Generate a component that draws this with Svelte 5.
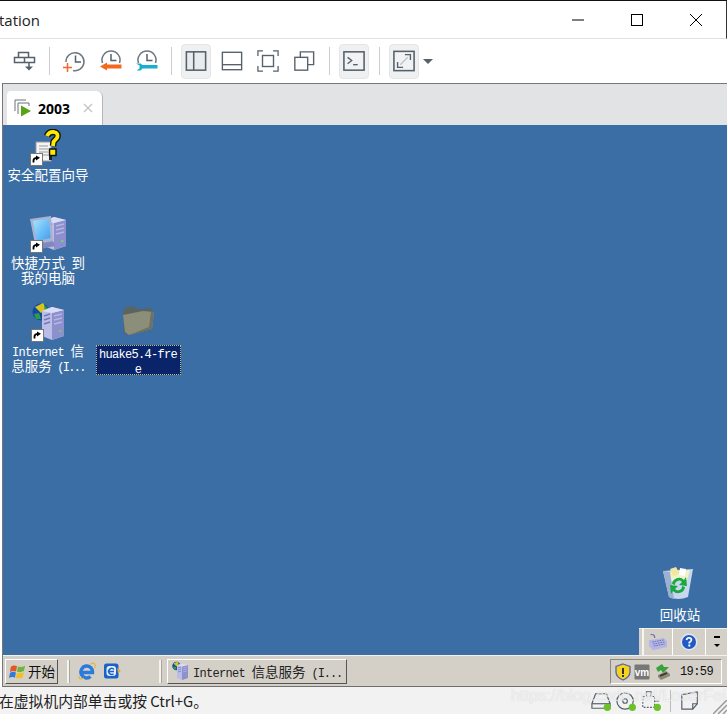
<script>
  const clocks = ['plus', 'back', 'wrench'];
</script>

{#snippet shortcut()}
  <rect x="0.5" y="0.5" width="12" height="12" fill="#fff" stroke="#777"/>
  <path d="M3.5 9.5 L3.5 7.5 Q3.5 5 7 4.8" fill="none" stroke="#000" stroke-width="1.8"/>
  <path d="M6 2.5 L10 4.8 L6 7.5Z" fill="#000"/>
{/snippet}

{#snippet tower()}
  <path d="M2 4 L12 0 L24 3 L24 29 L12 33 L2 29Z" fill="#b9bde8"/>
  <path d="M12 6 L24 3 L24 29 L12 33Z" fill="#8d90cc"/>
  <path d="M2 4 L12 0 L24 3 L12 6Z" fill="#dadcf6"/>
  <path d="M4 9 L10 7 M4 13 L10 11 M4 17 L10 15" stroke="#7478b4" stroke-width="1.4"/>
  <path d="M14 9 L22 7 M14 13 L22 11 M14 17 L22 15" stroke="#b4b7e4" stroke-width="1.4"/>
  <rect x="19" y="23" width="2.5" height="2" fill="#6fcf6f"/>
{/snippet}

{#snippet iisIcon()}
  <svg class="fill" viewBox="0 0 36 40">
    <circle cx="11" cy="10" r="8.5" fill="#0f4aa6"/>
    <path d="M5 5 L13 1 L17 7 L11 11Z" fill="#d9c21c"/>
    <path d="M4 12 L9 11 L11 17 L6 17Z" fill="#2f9e3f"/>
    <path d="M14 3 L19 7 L15 10Z" fill="#2a9a3a"/>
    <g transform="translate(10 5)">{@render tower()}</g>
  </svg>
{/snippet}

{#snippet flag()}
  <svg class="fill" viewBox="0 0 18 18">
    <path d="M2 4 Q5 1.500 8.500 3.500 L7.500 9 Q4 7.500 1 9.500Z" fill="#e2562a"/>
    <path d="M9.500 3.800 Q13 5.200 17 2.800 L15.800 8.500 Q12 10.500 8.500 9.200Z" fill="#6eb43f"/>
    <path d="M1 10.500 Q4 8.500 7.300 10 L6.300 15.500 Q3 14 0 16Z" fill="#2f7bd8"/>
    <path d="M8.300 10.300 Q12 11.800 15.600 9.500 L14.500 15 Q11 17 7.300 15.800Z" fill="#f4c020"/>
  </svg>
{/snippet}

<div class="app">
  <header class="title">
    <span class="title-text">tation</span>
    <div class="win">
      <svg viewBox="0 0 14 14"><path d="M1 7H13" stroke="#000"/></svg>
      <svg viewBox="0 0 14 14"><rect x="1.500" y="1.500" width="11" height="11" fill="none" stroke="#000"/></svg>
      <svg viewBox="0 0 14 14"><path d="M1 1L13 13M13 1L1 13" stroke="#000" fill="none"/></svg>
    </div>
  </header>

  <div class="toolbar">
    <div class="tb">
      <svg viewBox="0 0 24 24" class="ico">
        <path d="M6.500 3.500H16.500V8.500H6.500ZM2.500 8.500H12.500V13.500H2.500ZM12.500 8.500H22.500V13.500H12.500Z" fill="none" stroke="#56616b" stroke-width="1.500"/>
        <path d="M17 13.500V19" stroke="#56616b" stroke-width="1.500"/>
        <path d="M13 17.500H21L17 21.500Z" fill="#56616b"/>
      </svg>
    </div>
    <i class="sep"></i>
    <div class="tb">
      <svg viewBox="0 0 24 24" class="ico">
        <path d="M4 13A9 9 0 1 1 11 21.500" fill="none" stroke="#6d7780" stroke-width="1.500"/>
        <path d="M13.500 6.500V13H19" fill="none" stroke="#56616b" stroke-width="1.500"/>
        <path d="M5.500 14V23M1 18.500H10" stroke="#ec6a2c" stroke-width="1.500"/>
      </svg>
    </div>
    {#each clocks.slice(1) as kind}
      <div class="tb shift">
        <svg viewBox="0 0 24 24" class="ico">
          <path d="M3.500 14A9 9 0 1 1 20.500 14" fill="none" stroke="#6d7780" stroke-width="1.500"/>
          <path d="M12 5V11.500H17.500" fill="none" stroke="#56616b" stroke-width="1.500"/>
          {#if kind === 'back'}
            <path d="M1 17.500L8 13.500V15.500H22.500V19.500H8V21.500Z" fill="#f26a21"/>
          {:else}
            <path d="M1 14.500H5.500L7.500 16H22.500V19.500H7.500L5.500 21.500H1.500L4.500 19.500V16.500Z" fill="#17aecf"/>
          {/if}
        </svg>
      </div>
    {/each}
    <i class="sep s2"></i>
    <div class="tb on">
      <svg viewBox="0 0 24 24" class="ico big">
        <rect x="1.500" y="2" width="21" height="20" fill="#e9ecef" stroke="#56616b" stroke-width="1.700"/>
        <path d="M9.500 2V22" stroke="#56616b" stroke-width="1.700"/>
      </svg>
    </div>
    <div class="tb">
      <svg viewBox="0 0 24 24" class="ico big">
        <rect x="1.500" y="2.500" width="21" height="19" fill="none" stroke="#56616b" stroke-width="1.500"/>
        <path d="M1.500 16H22.500" stroke="#56616b" stroke-width="1.500"/>
      </svg>
    </div>
    <div class="tb">
      <svg viewBox="0 0 24 24" class="ico big">
        <path d="M1 6.500V1H6.500M17.500 1H23V6.500M23 17.500V23H17.500M6.500 23H1V17.500" fill="none" stroke="#56616b" stroke-width="1.400"/>
        <rect x="6" y="6" width="12" height="12" fill="none" stroke="#56616b" stroke-width="1.500"/>
      </svg>
    </div>
    <div class="tb">
      <svg viewBox="0 0 24 24" class="ico big">
        <path d="M8 8V2H22.500V16H16" fill="none" stroke="#56616b" stroke-width="1.500"/>
        <rect x="2" y="8" width="14" height="14" fill="none" stroke="#56616b" stroke-width="1.500"/>
      </svg>
    </div>
    <i class="sep"></i>
    <div class="tb on">
      <svg viewBox="0 0 24 24" class="ico big">
        <rect x="1" y="2" width="22" height="20" fill="#f1f2f3" stroke="#56616b" stroke-width="1.700"/>
        <path d="M5 8L9.500 11.500L5 15" fill="none" stroke="#56616b" stroke-width="1.500"/>
        <path d="M11 16H16" stroke="#56616b" stroke-width="1.500"/>
      </svg>
    </div>
    <i class="sep"></i>
    <div class="tb on">
      <svg viewBox="0 0 24 24" class="ico big">
        <rect x="1" y="1.500" width="22" height="21" fill="#f1f2f3" stroke="#56616b" stroke-width="1.700"/>
        <path d="M8 16L16 8" stroke="#bfc5ca" stroke-width="1.500"/>
        <path d="M13 5H19V11" fill="none" stroke="#56616b" stroke-width="1.500"/>
        <path d="M5 13V19H11" fill="none" stroke="#56616b" stroke-width="1.500"/>
      </svg>
    </div>
    <span class="caret"></span>
  </div>

  <div class="console">
    <div class="tabs">
      <div class="tab">
        <svg viewBox="0 0 18 18" class="tab-ico">
          <path d="M1 12V1H12M4 15V4H15V7" fill="none" stroke="#6b7178" stroke-width="1"/>
          <path d="M7 6.500L17 12L7 17.500Z" fill="#5aa319"/>
        </svg>
        <b>2003</b>
        <svg viewBox="0 0 10 10" class="tab-x"><path d="M1 1L9 9M9 1L1 9" stroke="#c3c5c8" stroke-width="1.400"/></svg>
      </div>
    </div>

    <div class="desktop">
      <div class="di wizard">
        <div class="pic">
          <svg class="fill" viewBox="0 0 34 37">
            <rect x="7" y="13" width="15" height="19" fill="#f4f4f4" stroke="#9a9a9a"/>
            <path d="M10 17H19M10 20H19M10 23H19M10 26H19" stroke="#9a9a9a"/>
            <rect x="20" y="20" width="3" height="11" fill="#222"/>
            <path d="M18 7Q20 2.500 25 3Q30 4 28 9Q26 11 24.500 13L24 17" fill="none" stroke="#111" stroke-width="6.500"/>
            <path d="M18 7Q20 2.500 25 3Q30 4 28 9Q26 11 24.500 13L24 17" fill="none" stroke="#ffea00" stroke-width="3.800"/>
            <rect x="20.500" y="20" width="6.500" height="6.500" fill="#ffea00" stroke="#111" stroke-width="1.500"/>
            <g transform="translate(1 24)">{@render shortcut()}</g>
          </svg>
        </div>
        <span class="lab">安全配置向导</span>
      </div>

      <div class="di computer">
        <div class="pic">
          <svg class="fill" viewBox="0 0 38 38">
            <defs>
              <linearGradient id="scr" x1="0" y1="0" x2="1" y2="1">
                <stop offset="0" stop-color="#a6e6ff"/>
                <stop offset="1" stop-color="#3c9cf0"/>
              </linearGradient>
            </defs>
            <g transform="translate(13 2)">{@render tower()}</g>
            <path d="M1 4 L22 1 L24 26 L6 29Z" fill="#a8b2cf"/>
            <path d="M4 6 L20 3.500 L21.500 23 L7.500 26Z" fill="url(#scr)"/>
            <path d="M8 29 L24 26 L26 31 L12 34Z" fill="#8187bf"/>
            <g transform="translate(1 25)">{@render shortcut()}</g>
          </svg>
        </div>
        <span class="lab">快捷方式<span class="lat">&#160;</span>到<br>我的电脑</span>
      </div>

      <div class="di iis">
        <div class="pic">
          {@render iisIcon()}
          <svg class="sc" viewBox="0 0 13 13">{@render shortcut()}</svg>
        </div>
        <span class="lab"><span class="lat">Internet&#160;</span>信<br>息服务<span class="lat tight">&#160;(I...</span></span>
      </div>

      <div class="di folder">
        <div class="pic">
          <svg class="fill" viewBox="0 0 34 32">
            <path d="M2 7 L3 3 L12 1 L16 4 L31 3 L30 25 L7 30 L3 28Z" fill="#5c6462"/>
            <path d="M2 10 L22 6 L33 7 L31 24 L8 30 L4 27Z" fill="#8b8e78"/>
            <path d="M8 30 L31 24 L33 7 L30 7 L28 22Z" fill="#6e7163"/>
          </svg>
        </div>
        <span class="lab sel"><span class="lat">huake5.4-fre<br>e</span></span>
      </div>

      <div class="di bin">
        <div class="pic">
          <svg class="fill" viewBox="0 0 34 34">
            <path d="M2 5 L32 3 L27 31 Q17 35 8 31Z" fill="#c8d6ee"/>
            <path d="M5 6 L29 4 L26 14 L9 15Z" fill="#eef3c8"/>
            <path d="M9 3 L15 1 L19 8 L12 10Z" fill="#f4e6a0"/>
            <path d="M19 2 L25 3 L24 10 L18 9Z" fill="#fff"/>
            <path d="M2 5 L8 31 Q12 33 13 33 L9 6Z" fill="#9cb0d4"/>
            <path d="M11 18 A7 7 0 0 1 23 14 L25 11 L26 20 L18 19 L21 16 A4 4 0 0 0 14 19Z" fill="#18a83c"/>
            <path d="M24 21 A7 7 0 0 1 12 25 L10 28 L9 19 L17 20 L14 23 A4 4 0 0 0 21 20Z" fill="#18a83c"/>
          </svg>
        </div>
        <span class="lab">回收站</span>
      </div>

      <div class="langbar">
        <div class="lb grip"></div>
        <div class="lb kb">
          <svg viewBox="0 0 24 22" class="kb-ico">
            <path d="M8 6Q8 1 3 2" fill="none" stroke="#6d70a8" stroke-width="1.500"/>
            <path d="M1 9 L19 6 L23 10 L23 17 L6 21 L1 16Z" fill="#b3b6e6"/>
            <path d="M5 11 L19 8.500M6 13.500 L20 11M7 16 L20 13.500" stroke="#6c70ac" stroke-width="1.200" stroke-dasharray="2 1"/>
          </svg>
        </div>
        <div class="lb hp">
          <svg viewBox="0 0 18 18" class="hp-ico">
            <circle cx="9" cy="9" r="8.500" fill="#dfe6f6"/>
            <circle cx="9" cy="9" r="7" fill="#2459c4"/>
            <path d="M6.500 7Q7 4.500 9.300 4.800Q11.800 5.200 11.300 7.300Q10.800 8.500 9.300 9.500V10.500" fill="none" stroke="#fff" stroke-width="1.700"/>
            <rect x="8.300" y="11.500" width="2" height="2" fill="#fff"/>
          </svg>
        </div>
        <div class="lb arrows">
          <i class="dash"></i>
          <i class="down"></i>
        </div>
      </div>
    </div>

    <div class="taskbar">
      <div class="start">
        <span class="flag">{@render flag()}</span>
        <span>开始</span>
      </div>
      <i class="grip2"></i>
      <svg viewBox="0 0 18 18" class="ql ie">
        <path d="M3 10.500H14.500A5.800 6 0 1 0 12.500 14.500" fill="none" stroke="#2a7bdc" stroke-width="3.400"/>
        <path d="M1.500 14Q0 18.500 6 16M12.500 2Q18 -1 17 6" fill="none" stroke="#e7b43c" stroke-width="1.200"/>
      </svg>
      <svg viewBox="0 0 18 18" class="ql oe">
        <rect x="1" y="1.500" width="14.500" height="15" rx="2.500" fill="#1a62c6"/>
        <rect x="3.500" y="4" width="9.500" height="10" rx="3" fill="#e3efff"/>
        <path d="M6 9.500H11M11 7.500A3 3 0 1 0 10.500 11.800" fill="none" stroke="#1a62c6" stroke-width="1.500"/>
        <path d="M14 6L18 9L15 11Z" fill="#e9a23b"/>
      </svg>
      <i class="grip2 g2"></i>
      <div class="task">
        <span class="task-ico">{@render iisIcon()}</span>
        <span class="task-text"><span class="lat">Internet&#160;</span>信息服务<span class="lat tight2">&#160;(I...</span></span>
      </div>
      <div class="tray">
        <svg viewBox="0 0 16 18" class="tr-a">
          <path d="M8 1 L15 3.500 V9 Q15 14 8 17 Q1 14 1 9 V3.500Z" fill="#f7d21c" stroke="#5265a8" stroke-width="1.300"/>
          <rect x="7" y="5" width="2" height="6" fill="#333"/>
          <rect x="7" y="12" width="2" height="2" fill="#333"/>
        </svg>
        <svg viewBox="0 0 16 16" class="tr-b">
          <rect x="0.500" y="0.500" width="15" height="15" rx="1" fill="#777"/>
          <text x="8" y="11.500" class="vm">vm</text>
        </svg>
        <svg viewBox="0 0 16 18" class="tr-c">
          <path d="M1 5 L7 1 L9 4 L14 4 L8 10 L6 7 L3 9Z" fill="#3aa23a"/>
          <path d="M3 12 L11 8 L15 11 L15 13 L6 17 L3 14Z" fill="#8d8a70"/>
          <path d="M5 13 L12 10" stroke="#333" stroke-width="1.500"/>
        </svg>
        <span class="clock">19:59</span>
      </div>
    </div>
  </div>

  <footer class="status">
    <span class="hint">在虚拟机内部单击或按 Ctrl+G。</span>
    <div class="devs">
      <svg viewBox="0 0 24 22" class="dev">
        <path d="M6 3H18L22 14V19H2V14Z" fill="none" stroke="#56616b" stroke-width="1.300"/>
        <path d="M2 14H22" stroke="#56616b" stroke-width="1.300"/>
        <circle cx="19" cy="18" r="4" fill="#6cc12a"/>
      </svg>
      <svg viewBox="0 0 24 22" class="dev">
        <circle cx="11" cy="11" r="9" fill="none" stroke="#56616b" stroke-width="1.300"/>
        <circle cx="11" cy="11" r="2.500" fill="none" stroke="#56616b" stroke-width="1.300"/>
        <circle cx="19" cy="18" r="4" fill="#6cc12a"/>
      </svg>
      <svg viewBox="0 0 24 22" class="dev">
        <path d="M3 6H16V18H3Z" fill="none" stroke="#56616b" stroke-width="1.200" stroke-dasharray="2 1.500"/>
        <path d="M7 6V1H12V6M16 11H21" fill="none" stroke="#56616b" stroke-width="1.300"/>
        <circle cx="19" cy="18" r="4" fill="#6cc12a"/>
      </svg>
      <i class="dev-sep"></i>
      <svg viewBox="0 0 22 22" class="dev note">
        <path d="M2 4L19 1V14L14 20H2Z" fill="none" stroke="#56616b" stroke-width="1.300"/>
        <path d="M19 14H14V20" fill="none" stroke="#56616b" stroke-width="1.300"/>
      </svg>
      <svg viewBox="0 0 14 14" class="resize">
        <path d="M0 14L14 0M5 14L14 5M10 14L14 10" stroke="#9a9a9a" stroke-width="1.500"/>
      </svg>
    </div>
  </footer>

  <span class="mark">https://blog.csdn.net/LoserFei</span>
</div>

<style>
  :global(body) {
    margin: 0;
    background: #fff;
  }
  .app {
    position: relative;
    width: 727px;
    height: 714px;
    overflow: hidden;
    display: flex;
    flex-direction: column;
    background: #fff;
    font-family: "Noto Sans CJK SC", "Liberation Sans", sans-serif;
    border-top: 1px solid #111;
    box-sizing: border-box;
  }
  .fill {
    display: block;
    width: 100%;
    height: 100%;
  }
  .title {
    height: 37px;
    flex: none;
    display: flex;
    align-items: center;
    justify-content: space-between;
    border-bottom: 1px solid #e1e1e1;
    border-right: 1px solid #333;
  }
  .title-text {
    font: 15px "Open Sans", sans-serif;
    color: #222;
    margin-left: -1px;
  }
  .win {
    display: flex;
    gap: 45px;
    margin-right: 23px;
  }
  .win svg {
    width: 14px;
    height: 14px;
    display: block;
  }
  .toolbar {
    height: 44px;
    flex: none;
    display: flex;
    align-items: center;
    gap: 6px;
    padding-left: 9px;
    background: #fff;
  }
  .tb {
    width: 30px;
    height: 35px;
    box-sizing: border-box;
    flex: none;
    display: flex;
    align-items: center;
    justify-content: center;
    border-radius: 4px;
  }
  .tb.shift {
    margin-left: 0.500px;
  }
  .tb.on {
    background: #eff0f1;
    border: 1px solid #e4e5e6;
  }
  .ico {
    width: 24px;
    height: 24px;
  }
  .ico.big {
    width: 22px;
    height: 22px;
  }
  .sep {
    width: 1px;
    height: 28px;
    margin: 0 3px 0 4px;
    background: #ccc;
    flex: none;
  }
  .sep.s2 {
    margin-left: 3px;
  }
  .caret {
    width: 0;
    height: 0;
    border: 5px solid transparent;
    border-top: 5px solid #56616b;
    border-bottom: 0;
    margin-left: -2px;
  }
  .console {
    flex: none;
    display: flex;
    flex-direction: column;
    margin-left: 2px;
    border-left: 1px solid #777;
    border-top: 1px solid #777;
  }
  .tabs {
    height: 41px;
    flex: none;
    background: #e2e3e5;
    display: flex;
    align-items: flex-end;
    padding-left: 4px;
  }
  .tab {
    width: 96px;
    height: 34px;
    box-sizing: border-box;
    background: #fff;
    border-right: 1px solid #b5b7ba;
    border-radius: 4px 6px 0 0;
    display: flex;
    align-items: center;
    padding-left: 7px;
  }
  .tab-ico {
    width: 18px;
    height: 18px;
    flex: none;
  }
  .tab b {
    font: bold 14px "Open Sans", sans-serif;
    color: #000;
    margin-left: 6px;
  }
  .tab-x {
    width: 10px;
    height: 10px;
    margin-left: 13px;
  }
  .desktop {
    position: relative;
    height: 530px;
    flex: none;
    background: #3a6ea5;
  }
  .di {
    position: absolute;
    display: flex;
    flex-direction: column;
    align-items: center;
    width: 90px;
  }
  .pic {
    position: relative;
    flex: none;
  }
  .lab {
    color: #fff;
    font-size: 13.500px;
    line-height: 15px;
    text-align: center;
    white-space: nowrap;
  }
  .lat {
    font-family: "Liberation Mono", monospace;
    font-size: 12px;
    letter-spacing: -0.700px;
    line-height: 0;
    white-space: pre;
  }
  .lat.tight {
    letter-spacing: -1.700px;
  }
  .lat.tight2 {
    letter-spacing: -1.100px;
  }
  .wizard {
    left: 0;
    top: 4px;
  }
  .wizard .pic {
    width: 34px;
    height: 37px;
    margin-bottom: 1px;
    margin-left: -4px;
  }
  .computer {
    left: 0;
    top: 90px;
  }
  .computer .pic {
    width: 38px;
    height: 38px;
    margin-bottom: 2px;
  }
  .iis {
    left: 0;
    top: 177px;
  }
  .iis .pic {
    width: 36px;
    height: 40px;
    margin-bottom: 1px;
  }
  .sc {
    position: absolute;
    left: 1px;
    top: 27px;
    width: 13px;
    height: 13px;
  }
  .folder {
    left: 90px;
    top: 180px;
  }
  .folder .pic {
    width: 34px;
    height: 32px;
    margin-bottom: 8px;
  }
  .sel {
    background: #0a246a;
    outline: 1px dotted #c9b97a;
    outline-offset: -1px;
    width: 85px;
    height: 30px;
    box-sizing: border-box;
  }
  .bin {
    left: 632px;
    top: 441px;
  }
  .bin .pic {
    width: 34px;
    height: 34px;
    margin-bottom: 7px;
    margin-left: -4px;
  }
  .langbar {
    position: absolute;
    right: 0;
    bottom: 0;
    width: 88px;
    height: 27px;
    display: flex;
    background: #d4d0c8;
    box-shadow: inset 0 1px 0 #f2f0ea;
  }
  .lb {
    height: 100%;
    display: flex;
    align-items: center;
    justify-content: center;
    border-right: 1px solid #fff;
    box-sizing: border-box;
  }
  .grip {
    width: 5px;
    border-right: 2px solid #f6f5f1;
  }
  .kb {
    width: 29px;
  }
  .kb-ico {
    width: 20px;
    height: 18px;
  }
  .hp {
    width: 33px;
  }
  .hp-ico {
    width: 18px;
    height: 18px;
  }
  .arrows {
    flex: 1;
    border-right: 0;
    flex-direction: column;
    gap: 6px;
  }
  .dash {
    width: 6px;
    height: 2px;
    background: #000;
  }
  .down {
    width: 0;
    height: 0;
    border: 3px solid transparent;
    border-top: 3px solid #000;
    border-bottom: 0;
  }
  .taskbar {
    height: 32px;
    flex: none;
    box-sizing: border-box;
    background: #d4d0c8;
    border-top: 1px solid #f3f1ec;
    border-bottom: 1px solid #6f6f6f;
    display: flex;
    align-items: center;
    position: relative;
    padding-left: 2px;
  }
  .start {
    width: 53px;
    height: 25px;
    box-sizing: border-box;
    flex: none;
    display: flex;
    align-items: center;
    gap: 2px;
    padding-left: 3px;
    font-size: 13.500px;
    color: #111;
    background: #d4d0c8;
    border: 1px solid;
    border-color: #fff #555 #555 #fff;
  }
  .flag {
    width: 17px;
    height: 17px;
    display: block;
  }
  .grip2 {
    width: 2px;
    height: 23px;
    margin-left: 9px;
    background: #f4f3ee;
    box-shadow: 1px 0 0 #a8a59e;
    flex: none;
  }
  .g2 {
    margin-left: 38px;
  }
  .ql {
    width: 18px;
    height: 18px;
    flex: none;
  }
  .ie {
    margin-left: 9px;
  }
  .oe {
    margin-left: 7px;
  }
  .task {
    width: 180px;
    height: 25px;
    box-sizing: border-box;
    flex: none;
    margin-left: 6px;
    display: flex;
    align-items: center;
    gap: 4px;
    padding-left: 3px;
    border: 1px solid;
    border-color: #fff #555 #555 #fff;
    color: #222;
    font-size: 13.500px;
    white-space: nowrap;
  }
  .task-ico {
    width: 18px;
    height: 20px;
    display: block;
  }
  .tray {
    position: absolute;
    left: 607px;
    top: 3px;
    width: 112px;
    height: 25px;
    box-sizing: border-box;
    border: 1px solid;
    border-color: #8a8880 #fff #fff #8a8880;
    display: flex;
    align-items: center;
    padding-left: 4px;
  }
  .tr-a {
    width: 16px;
    height: 18px;
  }
  .tr-b {
    width: 16px;
    height: 16px;
    margin-left: 3px;
  }
  .tr-c {
    width: 16px;
    height: 18px;
    margin-left: 5px;
  }
  .vm {
    font: bold 10px "Liberation Sans", sans-serif;
    fill: #fff;
    text-anchor: middle;
  }
  .clock {
    font: 12px "Liberation Mono", monospace;
    letter-spacing: -0.600px;
    color: #111;
    margin-left: 9px;
  }
  .status {
    flex: 1;
    min-height: 0;
    background: #f2f2f2;
    display: flex;
    align-items: center;
    justify-content: space-between;
    position: relative;
  }
  .hint {
    font-size: 14.800px;
    color: #222;
    margin-left: -1px;
    white-space: nowrap;
  }
  .devs {
    display: flex;
    align-items: center;
    gap: 1px;
    padding-right: 27px;
  }
  .dev {
    width: 24px;
    height: 20px;
  }
  .dev-sep {
    width: 1px;
    height: 22px;
    background: #bbb;
    margin: 0 8px 0 6px;
  }
  .note {
    width: 20px;
  }
  .resize {
    position: absolute;
    right: 0;
    bottom: 0;
    width: 14px;
    height: 14px;
  }
  .mark {
    position: absolute;
    left: 511px;
    top: 685px;
    font: 16.400px "Liberation Sans", sans-serif;
    color: rgba(255, 255, 255, 0.7);
    white-space: nowrap;
    text-shadow: 0 0 1px rgba(120, 120, 120, 0.35);
  }
</style>
